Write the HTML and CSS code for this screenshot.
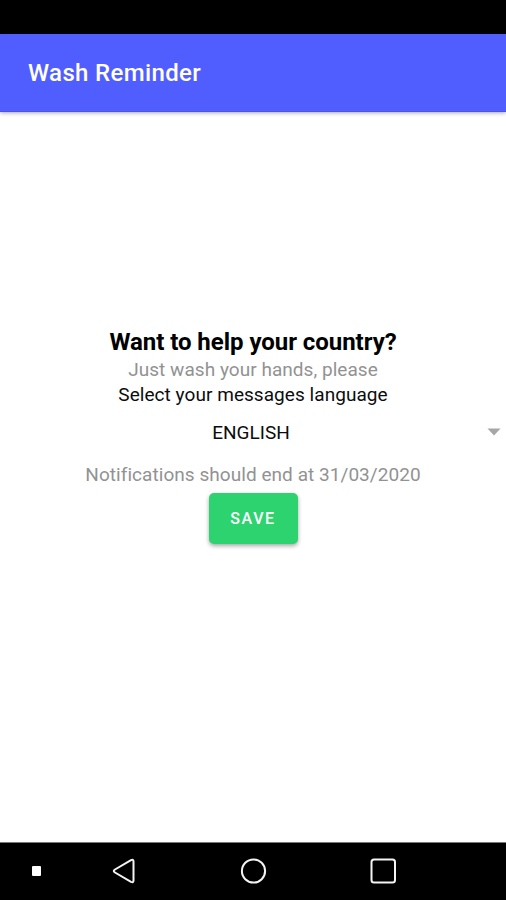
FILE: index.html
```html
<!DOCTYPE html>
<html lang="en">
<head>
<meta charset="utf-8">
<title>Wash Reminder</title>
<link rel="stylesheet" href="styles.css">
</head>
<body>
<div class="status-bar"></div>
<header class="toolbar"><h1 class="toolbar-title">Wash Reminder</h1></header>
<main class="content">
  <h2 class="heading">Want to help your country?</h2>
  <p class="muted hint">Just wash your hands, please</p>
  <p class="label">Select your messages language</p>
  <div class="select"><span class="select-value">ENGLISH</span><svg class="caret" width="14" height="8" viewBox="0 0 14 8"><path d="M0.500 0.500H13.500L7 7.500Z" fill="#a6a6a6"/></svg></div>
  <p class="muted end-date">Notifications should end at 31/03/2020</p>
  <button class="save">SAVE</button>
</main>
<nav class="nav-bar">
  <svg width="506" height="57" viewBox="0 0 506 57" fill="none" stroke="#f4f4f4" stroke-width="2">
    <rect x="32" y="23" width="9" height="10" rx="1" fill="#fff" stroke="none"/>
    <path d="M131 17.200L115 26.500Q112.500 28 115 29.500L131 38.800Q133.500 40 133.500 37.500V18.500Q133.500 16 131 17.200Z"/>
    <circle cx="253.500" cy="28" r="11.600"/>
    <rect x="371.500" y="16.500" width="23.500" height="23" rx="2.500"/>
  </svg>
</nav>
</body>
</html>
```
FILE: styles.css
```css
* { box-sizing: border-box; }
body { margin: 0; height: 900px; display: flex; flex-direction: column; overflow: hidden; background: #fff; color: #0c0c0c; font-family: Roboto, sans-serif; }
h1, h2, p { margin: 0; font-weight: 400; }
.status-bar { height: 34px; background: #000; }
.toolbar { height: 78px; padding: 0 28px; display: flex; align-items: center; background: #505eff; border-bottom: 1px solid #4a54dc; box-shadow: 0 1px 4px rgba(0,0,60,.35); }
.toolbar-title { color: #fff; font-size: 24px; font-weight: 500; line-height: 30px; letter-spacing: .35px; padding-top: 1px; }
.content { height: 730px; padding-top: 214px; display: flex; flex-direction: column; align-items: center; white-space: nowrap; }
.heading { height: 32px; line-height: 32px; font-size: 24px; font-weight: 700; letter-spacing: -.04px; color: #000; }
.muted { color: #929292; }
.hint { height: 24px; line-height: 24px; font-size: 19px; letter-spacing: .04px; }
.label { height: 24px; line-height: 25px; font-size: 19px; letter-spacing: .05px; }
.select { width: 100%; height: 52px; margin-bottom: 2px; display: grid; grid-template-columns: 1fr auto 1fr; align-items: center; font-size: 19px; }
.select-value { grid-column: 2; margin-right: 4px; }
.caret { grid-column: 3; justify-self: end; margin-right: 5px; }
.end-date { height: 30px; line-height: 30px; font-size: 19px; letter-spacing: .05px; }
.save { width: 89px; height: 51px; margin-top: 3px; padding: 0 0 1px; border: 0; border-radius: 5px; background: #2dd36f; color: #fff; font: 500 16px Roboto, sans-serif; letter-spacing: 1.6px; box-shadow: 0 2px 4px rgba(0,0,0,.35); }
.nav-bar { height: 58px; background: #000; border-top: 1px solid #777; }
.nav-bar svg { display: block; }
```
